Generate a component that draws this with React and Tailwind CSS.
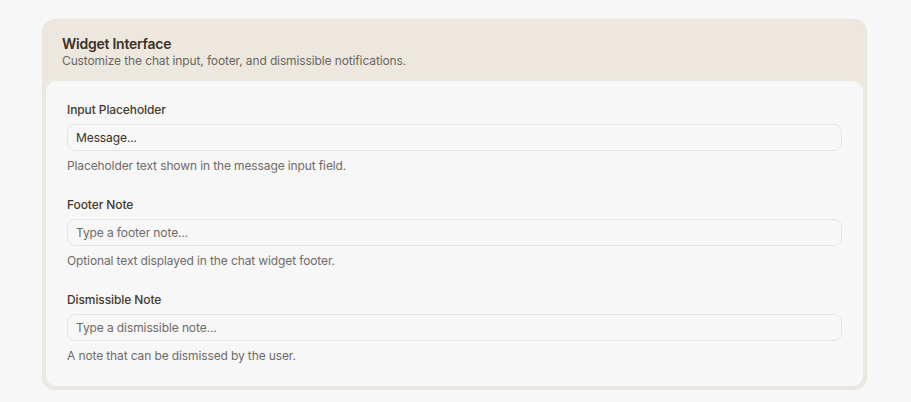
import React from "react";

const fields = [
  {
    label: "Input Placeholder",
    value: "Message...",
    placeholder: "",
    help: "Placeholder text shown in the message input field.",
  },
  {
    label: "Footer Note",
    value: "",
    placeholder: "Type a footer note...",
    help: "Optional text displayed in the chat widget footer.",
  },
  {
    label: "Dismissible Note",
    value: "",
    placeholder: "Type a dismissible note...",
    help: "A note that can be dismissed by the user.",
  },
];

const Field = ({ label, value, placeholder, help }) => (
  <div className="flex flex-col">
    <label className="text-[12px] leading-4 font-medium tracking-[-0.1px] text-[#45392f]">
      {label}
    </label>
    <input
      type="text"
      defaultValue={value}
      placeholder={placeholder}
      className="mt-[6px] h-[27px] w-full rounded-lg border border-[#e4e4e4] bg-[#f7f7f7] px-2 text-[12px] tracking-[-0.1px] text-[#3a302a] placeholder:text-[#6f6a66] outline-none"
    />
    <p className="mt-[7px] text-[12px] leading-4 tracking-[-0.12px] text-[#6f6b68]">
      {help}
    </p>
  </div>
);

const App = () => {
  return (
    <div
      className="min-h-screen w-full bg-[#f7f7f7] pt-5 pl-[43px] pr-[45px]"
      style={{ fontFamily: "Inter, 'Noto Sans', sans-serif" }}
    >
      <div className="rounded-xl bg-[#ede8df] p-[3px] shadow-[0_0_0_1px_#e9e5dc]">
        <div className="px-4 pt-[11px] pb-3">
          <h2 className="text-[14px] leading-[19px] font-semibold tracking-[-0.25px] text-[#3d3129]">
            Widget Interface
          </h2>
          <p className="text-[12px] leading-4 tracking-[-0.12px] text-[#6b6660]">
            Customize the chat input, footer, and dismissible notifications.
          </p>
        </div>
        <div className="flex flex-col gap-[23px] rounded-[10px] bg-[#f7f7f7] px-[21px] pt-[21px] pb-[22px]">
          {fields.map((f) => (
            <Field key={f.label} {...f} />
          ))}
        </div>
      </div>
    </div>
  );
};

export default App;
